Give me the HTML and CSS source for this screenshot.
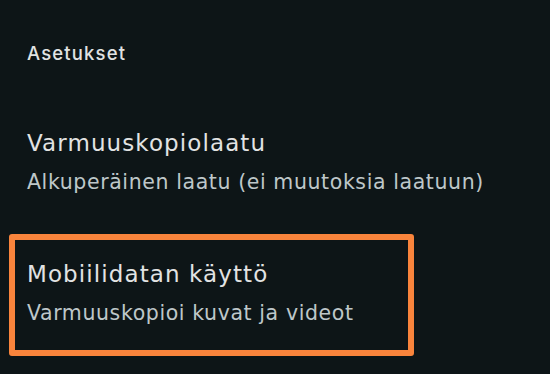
FILE: index.html
```html
<!DOCTYPE html>
<html lang="fi">
<head>
<meta charset="utf-8">
<link rel="stylesheet" href="styles.css">
</head>
<body>
<div class="page">
  <h2 class="section">Asetukset</h2>
  <div class="item first">
    <div class="title">Varmuuskopiolaatu</div>
    <div class="sub">Alkuperäinen laatu (ei muutoksia laatuun)</div>
  </div>
  <div class="item highlight">
    <div class="title">Mobiilidatan käyttö</div>
    <div class="sub">Varmuuskopioi kuvat ja videot</div>
  </div>
</div>
</body>
</html>
```
FILE: styles.css
```css
html, body {
  margin: 0;
  height: 100%;
  background: #0d1517;
}
body {
  font-family: "DejaVu Sans", "Open Sans", sans-serif;
  overflow: hidden;
}
.page {
  padding: 41px 0 0 27px;
}
.section {
  margin: 0;
  font-family: Inter, "Open Sans", sans-serif;
  font-size: 18.5px;
  line-height: 24px;
  font-weight: 500;
  letter-spacing: 1.15px;
  color: #e1e3e3;
}
.item .title {
  font-size: 23px;
  line-height: 32px;
  letter-spacing: 1.1px;
  color: #e2e3e3;
}
.item .sub {
  margin-top: 9px;
  font-size: 20.5px;
  line-height: 28px;
  letter-spacing: 0.6px;
  color: #bec7c9;
}
.item.first {
  margin-top: 62px;
}
.item.highlight {
  box-sizing: border-box;
  margin: 38px 0 0 -18px;
  width: 405px;
  border: 6px solid #f9843c;
  border-radius: 3px;
  padding: 18px 12px 23px 12px;
}
```
